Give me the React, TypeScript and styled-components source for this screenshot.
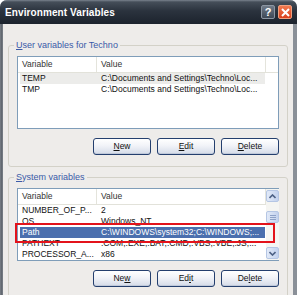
import styled, { createGlobalStyle } from 'styled-components';

type Row = { name: string; value: string };

const userVars: Row[] = [
  { name: 'TEMP', value: 'C:\\Documents and Settings\\Techno\\Loc...' },
  { name: 'TMP', value: 'C:\\Documents and Settings\\Techno\\Loc...' },
];

const systemVars: Row[] = [
  { name: 'NUMBER_OF_P...', value: '2' },
  { name: 'OS', value: 'Windows_NT' },
  { name: 'Path', value: 'C:\\WINDOWS\\system32;C:\\WINDOWS;...' },
  { name: 'PATHEXT', value: '.COM;.EXE;.BAT;.CMD;.VBS;.VBE;.JS;...' },
  { name: 'PROCESSOR_A...', value: 'x86' },
];

function App() {
  return (
    <>
      <Global />
      <Window>
        <TitleBar>
          <Title>Environment Variables</Title>
          <Controls>
            <HelpButton>?</HelpButton>
            <CloseButton>
              <svg width="9" height="9" viewBox="0 0 9 9">
                <path d="M1 1L8 8M8 1L1 8" stroke="#fff" strokeWidth="2" />
              </svg>
            </CloseButton>
          </Controls>
        </TitleBar>
        <Body>
          <Group>
            <Legend><u>U</u>ser variables for Techno</Legend>
            <List>
              <Table>
                <Header>
                  <HeadCell $w={79}>Variable</HeadCell>
                  <HeadCell $w={169}>Value</HeadCell>
                </Header>
                {userVars.map((r, i) => (
                  <ItemRow key={r.name} $sel={i === 0 ? 'idle' : undefined}>
                    <NameCell>{r.name}</NameCell>
                    <ValueCell>{r.value}</ValueCell>
                  </ItemRow>
                ))}
              </Table>
            </List>
            <Buttons>
              <Button><u>N</u>ew</Button>
              <Button><u>E</u>dit</Button>
              <Button><u>D</u>elete</Button>
            </Buttons>
          </Group>
          <Group>
            <Legend><u>S</u>ystem variables</Legend>
            <List>
              <Table>
                <Header>
                  <HeadCell $w={79}>Variable</HeadCell>
                  <HeadCell $w={169}>Value</HeadCell>
                </Header>
                {systemVars.map((r) => (
                  <ItemRow key={r.name} $sel={r.name === 'Path' ? 'focus' : undefined}>
                    <NameCell>{r.name}</NameCell>
                    <ValueCell>{r.value}</ValueCell>
                  </ItemRow>
                ))}
              </Table>
              <ScrollBar>
                <ScrollButton>
                  <svg width="7" height="5" viewBox="0 0 7 5">
                    <path d="M0.5 4L3.5 1L6.5 4" stroke="#4d6185" strokeWidth="1.6" fill="none" />
                  </svg>
                </ScrollButton>
                <Track>
                  <Thumb>
                    <Grip />
                  </Thumb>
                </Track>
                <ScrollButton>
                  <svg width="7" height="5" viewBox="0 0 7 5">
                    <path d="M0.5 1L3.5 4L6.5 1" stroke="#4d6185" strokeWidth="1.6" fill="none" />
                  </svg>
                </ScrollButton>
              </ScrollBar>
              <Highlight />
            </List>
            <Buttons>
              <Button>Ne<u>w</u></Button>
              <Button>Ed<u>i</u>t</Button>
              <Button>De<u>l</u>ete</Button>
            </Buttons>
          </Group>
        </Body>
      </Window>
    </>
  );
}

const Global = createGlobalStyle`
  html, body {
    margin: 0;
    padding: 0;
    background: #fff;
    overflow: hidden;
  }

  body {
    font-family: "Liberation Sans", Arial, sans-serif;
  }
`;

const Window = styled.div`
  width: 297px;
  height: 295px;
  display: flex;
  flex-direction: column;
  background: linear-gradient(to right, #7a8088, #5b6169 2px, #8a9098 3px);
  border-radius: 7px 7px 0 0;
  overflow: hidden;
`;

const TitleBar = styled.div`
  height: 24px;
  flex: none;
  display: flex;
  align-items: center;
  padding: 0 5px 0 5px;
  background: linear-gradient(#7a838e 0, #454e59 2px, #2b333e 45%, #1c232d 100%);
`;

const Title = styled.div`
  color: #fff;
  font-weight: bold;
  font-size: 10px;
  letter-spacing: 0.1px;
`;

const Controls = styled.div`
  margin-left: auto;
  display: flex;
  gap: 3px;
`;

const HelpButton = styled.div`
  width: 14px;
  height: 14px;
  box-sizing: border-box;
  border: 1px solid #8c96a3;
  border-radius: 2px;
  background: linear-gradient(#6f7a88, #3e4856);
  color: #fff;
  font-weight: bold;
  font-size: 11px;
  line-height: 12px;
  text-align: center;
`;

const CloseButton = styled.div`
  width: 14px;
  height: 14px;
  box-sizing: border-box;
  border: 1px solid #f0a080;
  border-radius: 2px;
  background: linear-gradient(#f07a50, #d9401c);
  display: flex;
  align-items: center;
  justify-content: center;
`;

const Body = styled.div`
  flex: 1;
  margin: 0 4px 0 3px;
  background: #eeecea;
  padding: 16px 5px 0;
  display: flex;
  flex-direction: column;
  gap: 5px;
`;

const Group = styled.fieldset`
  margin: 0;
  border: 1px solid #d3d1c8;
  border-radius: 3px;
  padding: 6px 8px 11px;
  min-width: 0;
`;

const Legend = styled.legend`
  padding: 0 2px;
  margin-left: -3px;
  font-size: 9px;
  line-height: 10px;
  color: #3a5aa8;

  u {
    text-decoration-thickness: 1px;
  }
`;

const List = styled.div`
  position: relative;
  height: 71px;
  border: 1px solid #7f9db9;
  background: #fff;
  display: flex;
`;

const Table = styled.div`
  flex: 1;
  display: flex;
  flex-direction: column;
`;

const Header = styled.div`
  height: 15px;
  flex: none;
  display: flex;
  border-bottom: 1px solid #e2e2da;
`;

const HeadCell = styled.div<{ $w: number }>`
  width: ${(p) => p.$w}px;
  box-sizing: border-box;
  padding-left: 4px;
  border-right: 1px solid #e4e4dc;
  font-size: 8.5px;
  line-height: 15px;
  color: #333;
`;

const ItemRow = styled.div<{ $sel?: 'focus' | 'idle' }>`
  height: 11px;
  flex: none;
  width: 245px;
  margin-left: 2px;
  display: flex;
  font-size: 8.5px;
  line-height: 11px;
  white-space: nowrap;
  color: ${(p) => (p.$sel === 'focus' ? '#fff' : '#111')};
  background: ${(p) =>
    p.$sel === 'focus' ? '#4b6fae' : p.$sel === 'idle' ? '#ececea' : 'transparent'};
`;

const NameCell = styled.div`
  width: 79px;
  padding-left: 2px;
  box-sizing: border-box;
  overflow: hidden;
`;

const ValueCell = styled.div`
  flex: 1;
  padding-left: 2px;
  overflow: hidden;
`;

const ScrollBar = styled.div`
  width: 13px;
  flex: none;
  display: flex;
  flex-direction: column;
  background: #f5f5f2;
  padding: 1px 0;
`;

const ScrollButton = styled.div`
  height: 12px;
  box-sizing: border-box;
  border: 1px solid #b5c6e4;
  border-radius: 2px;
  background: linear-gradient(to right, #e2eaf8, #c3d2ee);
  display: flex;
  align-items: center;
  justify-content: center;
`;

const Track = styled.div`
  flex: 1;
  padding-top: 9px;
`;

const Thumb = styled.div`
  height: 12px;
  box-sizing: border-box;
  border: 1px solid #b5c6e4;
  border-radius: 2px;
  background: linear-gradient(to right, #e2eaf8, #c3d2ee);
  display: flex;
  align-items: center;
  justify-content: center;
`;

const Grip = styled.div`
  width: 6px;
  height: 5px;
  background: repeating-linear-gradient(#8ea2c8 0 1px, transparent 1px 2px);
`;

const Highlight = styled.div`
  position: absolute;
  left: -3px;
  top: 34px;
  width: 260px;
  height: 20px;
  box-sizing: border-box;
  border: 2px solid #e3131b;
  pointer-events: none;
`;

const Buttons = styled.div`
  display: flex;
  justify-content: flex-end;
  gap: 6px;
  margin-top: 9px;
`;

const Button = styled.div`
  width: 58px;
  height: 17px;
  box-sizing: border-box;
  border: 1px solid #243f6e;
  border-radius: 3px;
  background: linear-gradient(#ffffff, #f1f3f8 45%, #d4dbe8);
  box-shadow: inset 0 -1px 0 #c0c9da;
  font-size: 8.5px;
  line-height: 15px;
  text-align: center;
  color: #111;
`;

export default App;
